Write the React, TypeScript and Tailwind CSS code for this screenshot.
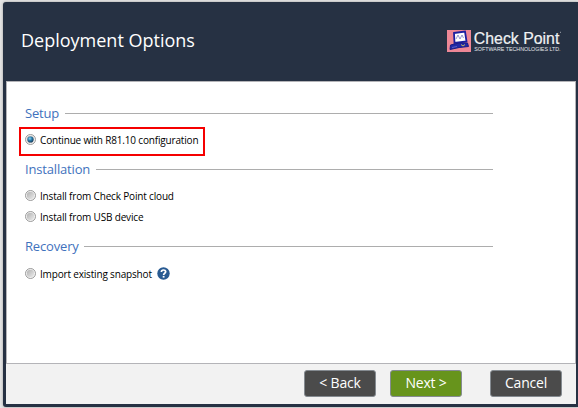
import type { ReactNode } from "react";

function Radio({ checked = false }: { checked?: boolean }) {
  return (
    <svg className="block h-[11px] w-[11px] shrink-0" viewBox="0 0 11 11">
      <defs>
        <linearGradient id="rim" x1="0" y1="0" x2="1" y2="1">
          <stop offset="0" stopColor="#b0b0b0" />
          <stop offset="1" stopColor="#ececec" />
        </linearGradient>
        <radialGradient id="dot" cx="0.4" cy="0.35" r="0.7">
          <stop offset="0" stopColor="#8fd4f2" />
          <stop offset="0.45" stopColor="#2b7fae" />
          <stop offset="1" stopColor="#12304e" />
        </radialGradient>
      </defs>
      <circle cx="5.5" cy="5.5" r="5" fill="#f4f4f4" stroke="#8e8f8f" strokeWidth="0.9" />
      <circle cx="5.5" cy="5.5" r="3.7" fill="url(#rim)" />
      {checked && <circle cx="5.5" cy="5.5" r="3.1" fill="url(#dot)" />}
    </svg>
  );
}

function Heading({ label, width }: { label: string; width: string }) {
  return (
    <div className="flex h-[18px] w-[468px] items-center">
      <h2 className={`${width} shrink-0 whitespace-nowrap text-[13px] leading-[18px] tracking-[-0.17px] text-[#3f72bd]`}>{label}</h2>
      <div className="h-px flex-1 bg-[#adadad]" />
    </div>
  );
}

function Option({ children, checked }: { children: ReactNode; checked?: boolean }) {
  return (
    <label className="flex h-[21px] items-center">
      <Radio checked={checked} />
      <span className="ml-[4px] whitespace-nowrap pt-px text-[10px] leading-[14px] tracking-[-0.17px] text-black">{children}</span>
    </label>
  );
}

function Logo() {
  return (
    <svg className="block h-[28px] w-[118px] overflow-visible" viewBox="0 -2 118 28">
      <rect x="0" y="1" width="24" height="22" fill="#ed8796" />
      <path d="M7 4 L18 2.5 L19.5 12.5 L7.5 14 Z" fill="#fff" stroke="#1c1fa0" strokeWidth="1.8" />
      <path d="M9 10 L11 6 L13 10 L15 6 L16.5 9" fill="none" stroke="#777bc0" strokeWidth="0.8" />
      <path d="M3.5 16 Q12 13 20.5 14 L21.5 17.5 Q12 18 3 20.5 Z" fill="#2028a8" stroke="#171c83" strokeWidth="1" />
      <path d="M5 18.5 L10 17.5" stroke="#6b70c9" strokeWidth="0.8" />
      <path d="M14 15.5 L16 17 L18 15.5" fill="none" stroke="#c6b65b" strokeWidth="1" />
      <text x="26.8" y="14.7" fontFamily="Liberation Sans, Arial, sans-serif" fontSize="17" fill="#f0f1f3" stroke="#f0f1f3" strokeWidth="0.2" textLength="85.5" lengthAdjust="spacingAndGlyphs">Check Point</text>
      <path d="M113 3.3 h0.8" stroke="#e4e6ea" strokeWidth="0.8" />
      <text x="27.3" y="21.6" fontFamily="Liberation Sans, Arial, sans-serif" fontSize="5.6" fill="#e4e6ea" textLength="86.3" lengthAdjust="spacingAndGlyphs">SOFTWARE TECHNOLOGIES LTD.</text>
    </svg>
  );
}

function Button({ children, color }: { children: ReactNode; color: string }) {
  return (
    <button className={`flex h-[27px] w-[72px] items-center justify-center rounded-[3px] border border-[#858b91] pb-[2px] text-[14px] leading-[20px] tracking-[-0.2px] text-white ${color}`}>
      {children}
    </button>
  );
}

export default function App() {
  return (
    <div className="h-[408px] w-[578px] overflow-hidden bg-[#e6e6e6] pl-[3px] pt-[2px] font-['Open_Sans','Noto_Sans',sans-serif]">
      <div className="h-[405px] rounded-l-[3px] bg-[#263143] pb-[3px] pl-[3px] pr-[2px] shadow-[0_0_3px_#999]">
        <header className="flex h-[79px] items-start justify-between pl-[15px] pr-[11px]">
          <h1 className="mt-[25px] whitespace-nowrap text-[18px] leading-[26px] text-white">Deployment Options</h1>
          <div className="mt-[25px]"><Logo /></div>
        </header>
        <main className="h-[282px] border-x border-t border-[#b4b4b8] bg-white pl-[18px] pt-[22px]">
          <Heading label="Setup" width="w-[40px]" />
          <div className="-ml-[6px] mt-[5px] flex h-[29px] w-[186px] items-center border-2 border-[#f50000] pb-[4px] pl-[4px]">
            <Option checked>Continue with R81.10 configuration</Option>
          </div>
          <div className="mt-[4px]">
            <Heading label="Installation" width="w-[71px]" />
          </div>
          <div className="mt-[7px]">
            <Option>Install from Check Point cloud</Option>
            <Option>Install from USB device</Option>
          </div>
          <div className="mt-[10px]">
            <Heading label="Recovery" width="w-[59px]" />
          </div>
          <div className="mt-[8px] flex items-center">
            <Option>Import existing snapshot</Option>
            <svg className="ml-[5px] block h-[13px] w-[13px]" viewBox="0 0 13 13">
              <circle cx="6.5" cy="6.5" r="6.2" fill="#285a92" />
              <path d="M4.4 5 C4.4 2.4 8.7 2.4 8.7 4.8 C8.7 6.3 6.6 6.3 6.6 8" fill="none" stroke="#fff" strokeWidth="1.7" />
              <rect x="5.7" y="8.9" width="1.8" height="1.7" fill="#fff" />
            </svg>
          </div>
        </main>
        <footer className="flex h-[41px] items-start justify-end border-t border-[#b4b4b8] bg-[#f2f2f2] pr-[14px] pt-[6px]">
          <Button color="bg-[#4b4b4b]">&lt; Back</Button>
          <div className="ml-[14px]"><Button color="bg-[#67941c]">Next &gt;</Button></div>
          <div className="ml-[28px]"><Button color="bg-[#4b4b4b]">Cancel</Button></div>
        </footer>
      </div>
    </div>
  );
}
